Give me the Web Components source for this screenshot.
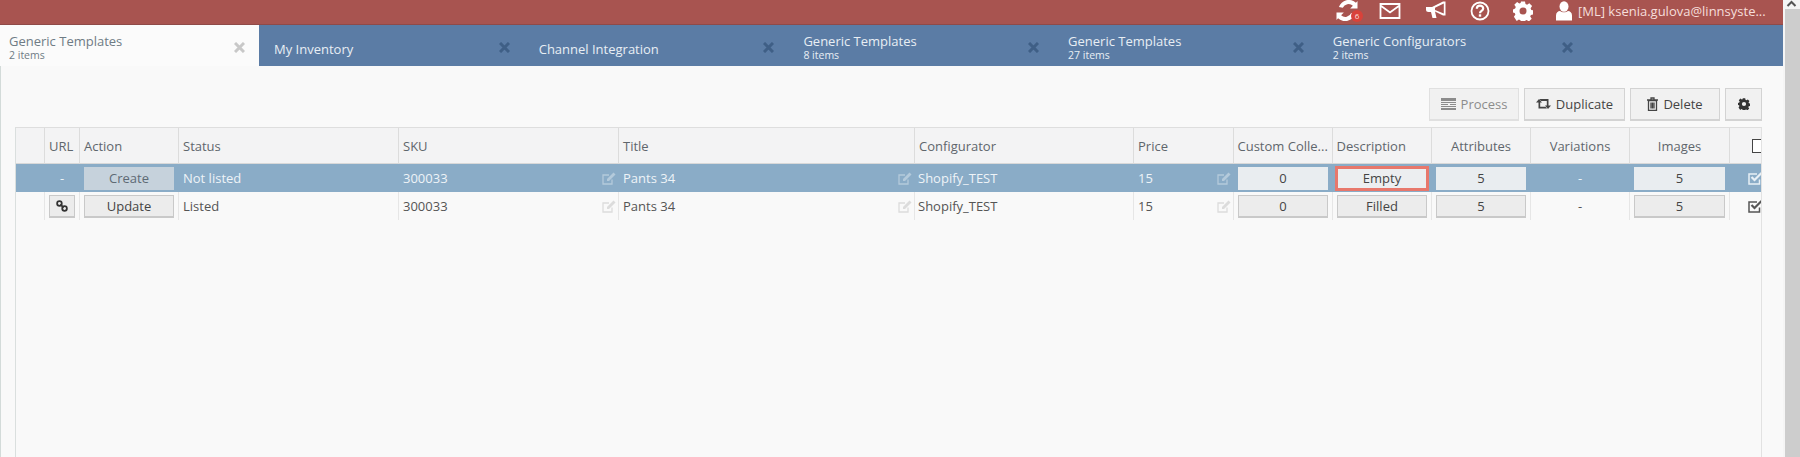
<!DOCTYPE html>
<html>
<head>
<meta charset="utf-8">
<title>Generic Templates</title>
<style>
  html, body { margin: 0; height: 457px; overflow: hidden; }
  body { font-family: "Open Sans", "Liberation Sans", sans-serif; font-size: 13px; background: #f9f9f9; }
</style>
</head>
<body>
<ml-app></ml-app>
<script>
const ICONS = {
  sync: '<svg width="24" height="21" viewBox="0 0 22 20"><path fill="#fff" d="M21 1v7h-7l2.600-2.600A6 6 0 0 0 7 7.500L3.300 6.600A10 10 0 0 1 19.500 2.600zM1 19v-7h7l-2.600 2.600a6 6 0 0 0 9.600-2.100l3.700.9A10 10 0 0 1 2.500 17.400z"/></svg>',
  mail: '<svg width="22" height="16" viewBox="0 0 22 16"><path fill="none" stroke="#fff" stroke-width="1.800" d="M1.500 1h19v14h-19zM1.500 2.500l9.500 7 9.500-7"/></svg>',
  horn: '<svg width="22" height="19" viewBox="0 0 22 19"><path fill="#fff" d="M1 6h6l11-5.500h2.500v14H18L10 10.500l1.500 6.500H7.500L6 11H3.500A2.500 2.500 0 0 1 1 8.500zM18.800 2.500 10 6.800v2.300l8.800 3.500z"/></svg>',
  help: '<svg width="20" height="20" viewBox="0 0 20 20"><circle cx="10" cy="10" r="8.500" fill="none" stroke="#fff" stroke-width="1.800"/><path fill="none" stroke="#fff" stroke-width="2.200" d="M6.800 7.800c0-4.200 6.400-4.200 6.400-.2 0 2.400-3.200 2.300-3.200 4.600"/><rect x="8.800" y="13.300" width="2.400" height="2.400" fill="#fff"/></svg>',
  gear: '<svg width="20" height="20" viewBox="0 0 20 20"><path fill="currentColor" fill-rule="evenodd" d="M8 .5h4l.5 2.600 1.600.7 2.200-1.500 2.800 2.800-1.500 2.200.7 1.600 2.200.5v4l-2.600.5-.7 1.600 1.500 2.200-2.800 2.800-2.200-1.500-1.600.7-.5 2.100H8l-.5-2.600-1.600-.7-2.200 1.500L.9 15.700l1.500-2.200-.7-1.600L0 11.500v-3l2.100-.9.700-1.600L1.300 3.800 4.100 1l2.200 1.500 1.300-.5zM10 6.500a3.500 3.500 0 1 0 0 7 3.500 3.500 0 0 0 0-7z"/></svg>',
  user: '<svg width="16" height="20" viewBox="0 0 16 20"><ellipse cx="8" cy="5.500" rx="4.500" ry="5.200" fill="#fff"/><path fill="#fff" d="M0 19.500v-5c0-3 2-4.300 4-4.500 2.200 1.700 5.800 1.700 8 0 2 .2 4 1.500 4 4.500v5z"/></svg>',
  close: '<svg width="11" height="11" viewBox="0 0 11 11"><path stroke="currentColor" stroke-width="3" d="M1 1l9 9M10 1l-9 9"/></svg>',
  process: '<svg width="15" height="12" viewBox="0 0 15 12"><path fill="currentColor" d="M0 0h15v3H0zM0 4h15v1H0zM0 6h7v1H0zM9 6h6v1H9zM0 8h15v1H0zM0 10h15v2H0z"/></svg>',
  retweet: '<svg width="15" height="12" viewBox="0 0 15 12"><path fill="currentColor" d="M3 1 6 4.500H4.200V8.800H9.500L11 10.500H2.500V4.500H0zM3.500 1H12.500V7.500H15L12 11 9 7.500H10.800V3H5z"/></svg>',
  trash: '<svg width="11" height="14" viewBox="0 0 11 14"><path fill="none" stroke="currentColor" stroke-width="1.300" d="M1.500 3.500h8v9.800h-8zM0 3h11M4 3V1h3v2M4 5.500v6M5.500 5.500v6M7 5.500v6"/></svg>',
  link: '<svg width="12" height="12" viewBox="0 0 15 15"><g fill="none" stroke="#333" stroke-width="2.200"><circle cx="4.300" cy="4.300" r="2.900"/><circle cx="10.700" cy="10.700" r="2.900"/><path d="M5.500 5.500l4 4"/></g></svg>',
  edit: '<svg width="14" height="13" viewBox="0 0 14 13"><path fill="none" stroke="currentColor" stroke-width="1.300" d="M10 7.500V12H1V3h6"/><path fill="currentColor" d="M5 7l6.500-6.500 2 2L7 9H5z"/></svg>',
  check: '<svg width="15" height="13" viewBox="0 0 15 13"><path fill="none" stroke="currentColor" stroke-width="1.500" d="M11.500 7.500V12H1V2h8"/><path fill="none" stroke="currentColor" stroke-width="2.200" d="M3.500 5l3 3 7-7"/></svg>'
};

class MlButton extends HTMLElement {
  constructor() {
    super();
    this.attachShadow({ mode: 'open' });
    this.shadowRoot.innerHTML = `
      <style>
        :host {
          display: flex; align-items: center; justify-content: center; gap: 5px;
          box-sizing: border-box; height: 23px;
          background: #ececec; border: 1px solid #c9c9c9; border-bottom-width: 2px;
          color: #444; font: 13px "Open Sans", sans-serif;
        }
        :host([variant="tool"]) { height: 33px; background: #f1f1f1; border-color: #d3d3d3; color: #444; }
        :host([variant="off"]) { height: 33px; background: #f1f1f1; border-color: #e0e0e0; color: #8c8c8c; }
        :host([variant="on-blue"]) { background: #e9edf0; border-color: #e9edf0; color: #444; }
        :host([variant="muted"]) { background: #c6d2dc; border-color: #c6d2dc; color: #5e6a74; }
        :host([variant="alert"]) { background: #eceef0; border: 3px solid #e8786c; color: #444; height: 25px; margin: 0 -2px; }
      </style>
      <slot></slot>`;
  }
}
customElements.define('ml-button', MlButton);

class MlTab extends HTMLElement {
  constructor() {
    super();
    this.attachShadow({ mode: 'open' });
    const sub = this.getAttribute('sub');
    this.shadowRoot.innerHTML = `
      <style>
        :host {
          display: flex; align-items: center; box-sizing: border-box; height: 41px;
          width: 264.700px; padding: 0 14px 0 15px; color: #e8eef4;
        }
        :host([active]) { width: 259px; padding: 0 9px; background: #fbfbfb; color: #6f7c85; }
        :host([wide]) { padding-right: 9px; }
        .txt { flex: 1; min-width: 0; padding-top: ${sub ? 3 : 7}px; }
        .t { font-size: 13px; line-height: 15px; }
        .s { font-size: 10.500px; line-height: 12px; }
        .x { color: #3f5f86; display: flex; margin-top: 3px; }
        :host([active]) .x { color: #c8c8c8; margin-right: 5px; }
      </style>
      <div class="txt"><div class="t">${this.getAttribute('label')}</div>${sub ? `<div class="s">${sub}</div>` : ''}</div>
      <span class="x">${ICONS.close}</span>`;
  }
}
customElements.define('ml-tab', MlTab);

class MlTopbar extends HTMLElement {
  constructor() {
    super();
    this.attachShadow({ mode: 'open' });
    this.shadowRoot.innerHTML = `
      <style>
        :host {
          display: flex; align-items: center; justify-content: flex-end; box-sizing: border-box;
          height: 25px; background: #a85450; color: #fff; padding-right: 19px;
          border-bottom: 1px solid #8f4a48;
        }
        .ic { display: flex; color: #fff; margin-top: -3px; position: relative; }
        .badge {
          position: absolute; left: 16px; top: 10px; width: 12px; height: 12px; border-radius: 50%;
          background: #d9423a; color: #fbdcd8; font-size: 8px; line-height: 12px; text-align: center;
        }
        .who { color: #f6dedb; font-size: 13px; margin-left: 6px; margin-top: -3px; width: 186px; white-space: nowrap; }
      </style>
      <span class="ic" style="margin-right:20px">${ICONS.sync}<span class="badge">6</span></span>
      <span class="ic" style="margin-right:24px">${ICONS.mail}</span>
      <span class="ic" style="margin-right:23px">${ICONS.horn}</span>
      <span class="ic" style="margin-right:23px">${ICONS.help}</span>
      <span class="ic" style="margin-right:23px">${ICONS.gear}</span>
      <span class="ic">${ICONS.user}</span>
      <span class="who">[ML] ksenia.gulova@linnsyste...</span>`;
  }
}
customElements.define('ml-topbar', MlTopbar);

class MlToolbar extends HTMLElement {
  constructor() {
    super();
    this.attachShadow({ mode: 'open' });
    this.shadowRoot.innerHTML = `
      <style>
        :host { display: flex; justify-content: flex-end; gap: 5px; padding: 22px 21px 6px 0; }
      </style>
      <ml-button variant="off" style="width:90px">${ICONS.process}Process</ml-button>
      <ml-button variant="tool" style="width:101px">${ICONS.retweet}Duplicate</ml-button>
      <ml-button variant="tool" style="width:90px">${ICONS.trash}Delete</ml-button>
      <ml-button variant="tool" style="width:37px;color:#333">${ICONS.gear.replace('width="20" height="20"', 'width="12" height="12"')}</ml-button>`;
  }
}
customElements.define('ml-toolbar', MlToolbar);

const COLUMNS = [
  ['', 29], ['URL', 35], ['Action', 99], ['Status', 220], ['SKU', 220], ['Title', 296],
  ['Configurator', 219], ['Price', 100], ['Custom Colle...', 99], ['Description', 99],
  ['Attributes', 99], ['Variations', 99], ['Images', 100], ['', 33]
];

class MlTable extends HTMLElement {
  constructor() {
    super();
    this.attachShadow({ mode: 'open' });
    const cols = COLUMNS.map((c) => c[1] + 'px').join(' ');
    const head = COLUMNS.map((c, i) => {
      let cls = 'h';
      if (i >= 10 && i <= 12) cls += ' mid';
      if (i === 8 || i === 9) cls += ' tight';
      if (i === 13) cls += ' end';
      return `<div class="${cls}">${c[0]}${i === 13 ? '<span class="box"></span>' : ''}</div>`;
    }).join('');
    this.shadowRoot.innerHTML = `
      <style>
        :host {
          display: block; flex: 1; margin: 0 21px 0 14px; min-height: 0; overflow: hidden;
          border-left: 1px solid #dadfde; border-right: 1px solid #e2e2e2; border-top: 1px solid #dedede;
          color: #555;
        }
        .grid { display: grid; grid-template-columns: ${cols}; grid-template-rows: 36px; grid-auto-rows: 28px; font-size: 13px; }
        .h {
          box-sizing: border-box; display: flex; align-items: center; padding-left: 4px;
          background: #f3f3f4; border-right: 1px solid #dcdcdc; border-bottom: 1px solid #d8d8d8;
          color: #5f666c; white-space: nowrap; overflow: hidden;
        }
        .h.mid { justify-content: center; padding: 0; }
        .h.tight { padding-left: 3.500px; }
        .h.end { border-right: 0; padding-left: 22px; }
        .box { box-sizing: border-box; flex: none; width: 15px; height: 14px; background: #fff; border: 1px solid #444; }
        .c {
          box-sizing: border-box; display: flex; align-items: center; padding: 0 4px; min-width: 0;
          border-right: 1px solid #e6e6e6; white-space: nowrap; color: #555;
        }
        .c.mid { justify-content: center; padding: 0; }
        .c ml-button { flex: 1; }
        .c .ed { margin-left: auto; margin-right: -2px; color: #dcdcdc; display: flex; }
        .c.last { border-right: 0; justify-content: flex-end; padding: 0; color: #555; }
        .sel .c { background: #8aacc7; color: #eef3f7; border-right-color: #8aacc7; }
        .sel .c .ed { color: #b4cadb; }
        .sel .c.last { color: #e8f0f6; }
        .row { display: contents; }
      </style>
      <div class="grid">
        ${head}
        ${this.row(true)}
        ${this.row(false)}
      </div>`;
  }

  row(sel) {
    const btn = (label, v) => `<ml-button variant="${sel ? v : ''}">${label}</ml-button>`;
    const edit = (t) => `<div class="c">${t}<span class="ed">${ICONS.edit}</span></div>`;
    return `<div class="row ${sel ? 'sel' : ''}">
      <div class="c"></div>
      ${sel ? '<div class="c mid">-</div>' : `<div class="c"><ml-button>${ICONS.link}</ml-button></div>`}
      <div class="c">${sel ? btn('Create', 'muted') : btn('Update', '')}</div>
      <div class="c">${sel ? 'Not listed' : 'Listed'}</div>
      ${edit('300033')}${edit('Pants 34')}
      <div class="c" style="padding-left:3px">Shopify_TEST</div>
      ${edit('15')}
      <div class="c">${btn('0', 'on-blue')}</div>
      <div class="c">${sel ? btn('Empty', 'alert') : btn('Filled', '')}</div>
      <div class="c">${btn('5', 'on-blue')}</div>
      <div class="c mid">-</div>
      <div class="c">${btn('5', 'on-blue')}</div>
      <div class="c last">${ICONS.check}</div>
    </div>`;
  }
}
customElements.define('ml-table', MlTable);

class MlScrollbar extends HTMLElement {
  constructor() {
    super();
    this.attachShadow({ mode: 'open' });
    this.shadowRoot.innerHTML = `
      <style>
        :host { display: flex; flex-direction: column; width: 17px; background: #f5f5f5; }
        .arrow { height: 9px; display: flex; justify-content: center; }
        .thumb { flex: 1; background: #cdcdcd; margin-left: 2px; }
      </style>
      <div class="arrow"><svg width="11" height="7" viewBox="0 0 11 7"><path fill="none" stroke="#555" stroke-width="2" d="M1.500 6 5.500 2l4 4"/></svg></div>
      <div class="thumb"></div>`;
  }
}
customElements.define('ml-scrollbar', MlScrollbar);

class MlApp extends HTMLElement {
  constructor() {
    super();
    this.attachShadow({ mode: 'open' });
    this.shadowRoot.innerHTML = `
      <style>
        :host { display: flex; height: 457px; background: #f9f9f9; font-family: "Open Sans", "Liberation Sans", sans-serif; }
        .main { flex: 1; min-width: 0; display: flex; flex-direction: column; }
        .tabs { display: flex; height: 41px; background: #5b7ca5; flex: none; }
        .body { flex: 1; min-height: 0; display: flex; flex-direction: column; border-left: 1px solid #d3dbd9; }
      </style>
      <div class="main">
        <ml-topbar></ml-topbar>
        <div class="tabs">
          <ml-tab active label="Generic Templates" sub="2 items"></ml-tab>
          <ml-tab label="My Inventory"></ml-tab>
          <ml-tab label="Channel Integration"></ml-tab>
          <ml-tab label="Generic Templates" sub="8 items"></ml-tab>
          <ml-tab label="Generic Templates" sub="27 items"></ml-tab>
          <ml-tab wide label="Generic Configurators" sub="2 items"></ml-tab>
        </div>
        <div class="body">
          <ml-toolbar></ml-toolbar>
          <ml-table></ml-table>
        </div>
      </div>
      <ml-scrollbar></ml-scrollbar>`;
  }
}
customElements.define('ml-app', MlApp);
</script>
</body>
</html>
